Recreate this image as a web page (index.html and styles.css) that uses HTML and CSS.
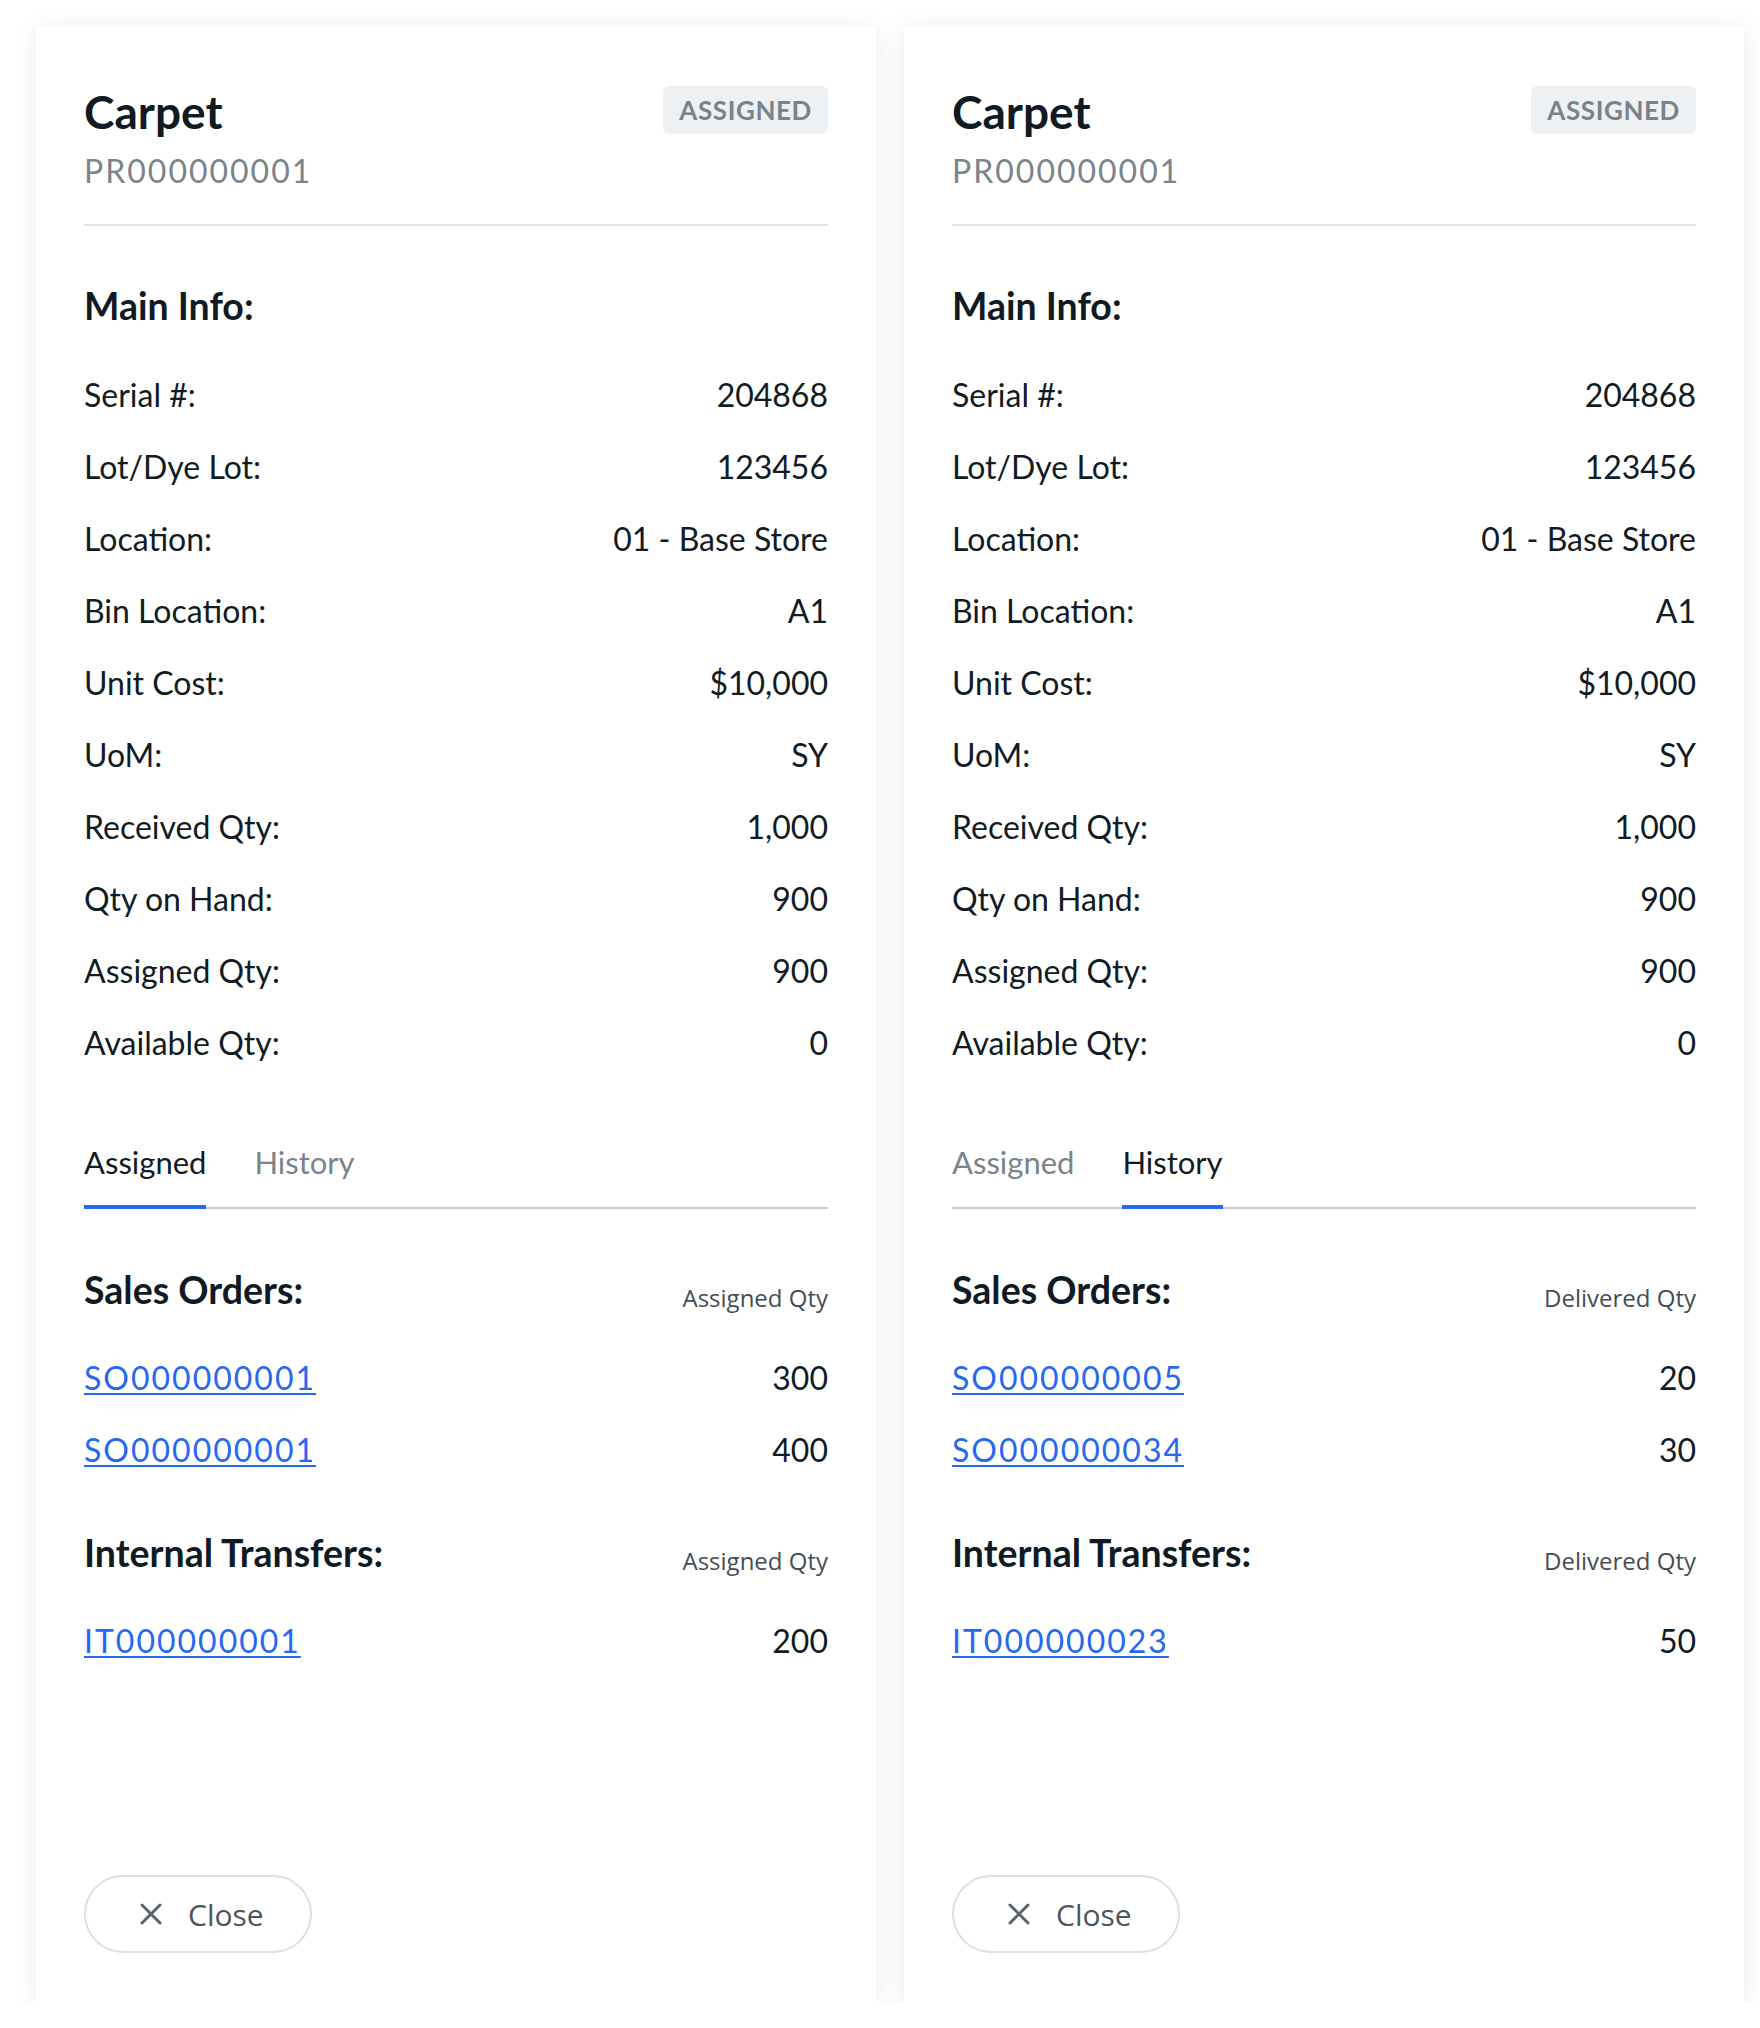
FILE: index.html
```html
<!DOCTYPE html>
<html lang="en">
<head>
<meta charset="utf-8">
<title>Carpet – Product Details</title>
<link rel="stylesheet" href="styles.css">
</head>
<body>
<div class="board">

  <section class="card">
    <header class="card-head">
      <div class="head-text">
        <h1 class="title">Carpet</h1>
        <div class="subtitle">PR000000001</div>
      </div>
      <span class="badge">ASSIGNED</span>
    </header>

    <h2 class="section-title">Main Info:</h2>
    <dl class="info-list">
      <div class="row"><dt>Serial #:</dt><dd>204868</dd></div>
      <div class="row"><dt>Lot/Dye Lot:</dt><dd>123456</dd></div>
      <div class="row"><dt>Location:</dt><dd>01 - Base Store</dd></div>
      <div class="row"><dt>Bin Location:</dt><dd>A1</dd></div>
      <div class="row"><dt>Unit Cost:</dt><dd>$10,000</dd></div>
      <div class="row"><dt>UoM:</dt><dd>SY</dd></div>
      <div class="row"><dt>Received Qty:</dt><dd>1,000</dd></div>
      <div class="row"><dt>Qty on Hand:</dt><dd>900</dd></div>
      <div class="row"><dt>Assigned Qty:</dt><dd>900</dd></div>
      <div class="row"><dt>Available Qty:</dt><dd>0</dd></div>
    </dl>

    <nav class="tabs">
      <span class="tab active">Assigned</span>
      <span class="tab">History</span>
    </nav>

    <div class="group">
      <div class="group-head">
        <h3 class="group-title">Sales Orders:</h3>
        <span class="col-label">Assigned Qty</span>
      </div>
      <ul class="link-list">
        <li class="row"><a href="#">SO000000001</a><span>300</span></li>
        <li class="row"><a href="#">SO000000001</a><span>400</span></li>
      </ul>
    </div>

    <div class="group group-second">
      <div class="group-head">
        <h3 class="group-title">Internal Transfers:</h3>
        <span class="col-label">Assigned Qty</span>
      </div>
      <ul class="link-list">
        <li class="row"><a href="#">IT000000001</a><span>200</span></li>
      </ul>
    </div>

    <footer class="card-foot">
      <button class="close-btn" type="button">
        <svg class="close-icon" viewBox="0 0 22 22" aria-hidden="true"><path d="M2 2 L20 20 M20 2 L2 20"/></svg>
        <span>Close</span>
      </button>
    </footer>
  </section>

  <section class="card">
    <header class="card-head">
      <div class="head-text">
        <h1 class="title">Carpet</h1>
        <div class="subtitle">PR000000001</div>
      </div>
      <span class="badge">ASSIGNED</span>
    </header>

    <h2 class="section-title">Main Info:</h2>
    <dl class="info-list">
      <div class="row"><dt>Serial #:</dt><dd>204868</dd></div>
      <div class="row"><dt>Lot/Dye Lot:</dt><dd>123456</dd></div>
      <div class="row"><dt>Location:</dt><dd>01 - Base Store</dd></div>
      <div class="row"><dt>Bin Location:</dt><dd>A1</dd></div>
      <div class="row"><dt>Unit Cost:</dt><dd>$10,000</dd></div>
      <div class="row"><dt>UoM:</dt><dd>SY</dd></div>
      <div class="row"><dt>Received Qty:</dt><dd>1,000</dd></div>
      <div class="row"><dt>Qty on Hand:</dt><dd>900</dd></div>
      <div class="row"><dt>Assigned Qty:</dt><dd>900</dd></div>
      <div class="row"><dt>Available Qty:</dt><dd>0</dd></div>
    </dl>

    <nav class="tabs">
      <span class="tab">Assigned</span>
      <span class="tab active">History</span>
    </nav>

    <div class="group">
      <div class="group-head">
        <h3 class="group-title">Sales Orders:</h3>
        <span class="col-label">Delivered Qty</span>
      </div>
      <ul class="link-list">
        <li class="row"><a href="#">SO000000005</a><span>20</span></li>
        <li class="row"><a href="#">SO000000034</a><span>30</span></li>
      </ul>
    </div>

    <div class="group group-second">
      <div class="group-head">
        <h3 class="group-title">Internal Transfers:</h3>
        <span class="col-label">Delivered Qty</span>
      </div>
      <ul class="link-list">
        <li class="row"><a href="#">IT000000023</a><span>50</span></li>
      </ul>
    </div>

    <footer class="card-foot">
      <button class="close-btn" type="button">
        <svg class="close-icon" viewBox="0 0 22 22" aria-hidden="true"><path d="M2 2 L20 20 M20 2 L2 20"/></svg>
        <span>Close</span>
      </button>
    </footer>
  </section>

</div>
</body>
</html>
```

FILE: styles.css
```css
* { box-sizing: border-box; }

html, body {
  margin: 0;
  padding: 0;
  background: #ffffff;
}

body {
  font-family: "Lato", "Open Sans", sans-serif;
  color: #111b23;
}

.board {
  display: flex;
  align-items: flex-start;
  gap: 28px;
  padding: 26px 0 0 36px;
}

.card {
  width: 840px;
  height: 1976px;
  background: #ffffff;
  box-shadow: 0 3px 24px rgba(0, 0, 0, 0.085);
  padding: 60px 48px 49px;
  display: flex;
  flex-direction: column;
}

/* Header */
.card-head {
  display: flex;
  justify-content: space-between;
  align-items: flex-start;
  padding-bottom: 33px;
  border-bottom: 2px solid #dfe3e7;
}

.title {
  margin: 0;
  font-size: 46px;
  line-height: 52px;
  font-weight: 700;
  color: #0f1a22;
}

.subtitle {
  margin-top: 13px;
  font-size: 32px;
  line-height: 40px;
  letter-spacing: 2px;
  color: #7b838b;
}

.badge {
  height: 48px;
  padding: 0 16px;
  display: inline-flex;
  align-items: center;
  background: #eef1f4;
  border-radius: 6px;
  font-size: 26px;
  font-weight: 700;
  letter-spacing: 0.6px;
  color: #7a828a;
}

/* Main info */
.section-title {
  margin: 58px 0 0;
  font-size: 37.5px;
  line-height: 44px;
  font-weight: 700;
  color: #0f1a22;
}

.info-list {
  margin: 31px 0 0;
}

.row {
  display: flex;
  justify-content: space-between;
  align-items: center;
  padding: 16px 0;
  font-size: 32px;
  line-height: 40px;
}

.row dt, .row dd {
  margin: 0;
}

/* Tabs */
.tabs {
  margin-top: 63px;
  display: flex;
  gap: 48px;
  border-bottom: 2px solid #c6ccd3;
}

.tab {
  font-size: 31px;
  line-height: 40px;
  padding-bottom: 23px;
  margin-bottom: -2px;
  border-bottom: 4px solid transparent;
  color: #7b838b;
}

.tab.active {
  color: #111b23;
  border-bottom-color: #2668f0;
}

/* Groups */
.group {
  margin-top: 59px;
}

.group-second {
  margin-top: 45px;
}

.group-head {
  display: flex;
  justify-content: space-between;
  align-items: flex-end;
}

.group-title {
  margin: 0;
  font-size: 37.5px;
  line-height: 44px;
  font-weight: 700;
  color: #0f1a22;
}

.col-label {
  font-family: "Open Sans", sans-serif;
  font-size: 24px;
  line-height: 28px;
  color: #454d54;
}

.link-list {
  list-style: none;
  margin: 30px 0 0;
  padding: 0;
}

.link-list a {
  color: #2668f0;
  letter-spacing: 2px;
  text-decoration: underline;
  text-decoration-thickness: 2px;
  text-underline-offset: 3px;
}

/* Footer */
.card-foot {
  margin-top: auto;
}

.close-btn {
  display: inline-flex;
  align-items: center;
  gap: 26px;
  height: 78px;
  padding: 0 46px 0 54px;
  background: #ffffff;
  border: 2px solid #dcdfe3;
  border-radius: 39px;
  font-family: "Open Sans", sans-serif;
  font-size: 30px;
  color: #4d555c;
  cursor: pointer;
}

.close-icon {
  width: 22px;
  height: 22px;
  fill: none;
  stroke: #5b636a;
  stroke-width: 3;
  stroke-linecap: round;
}
```
